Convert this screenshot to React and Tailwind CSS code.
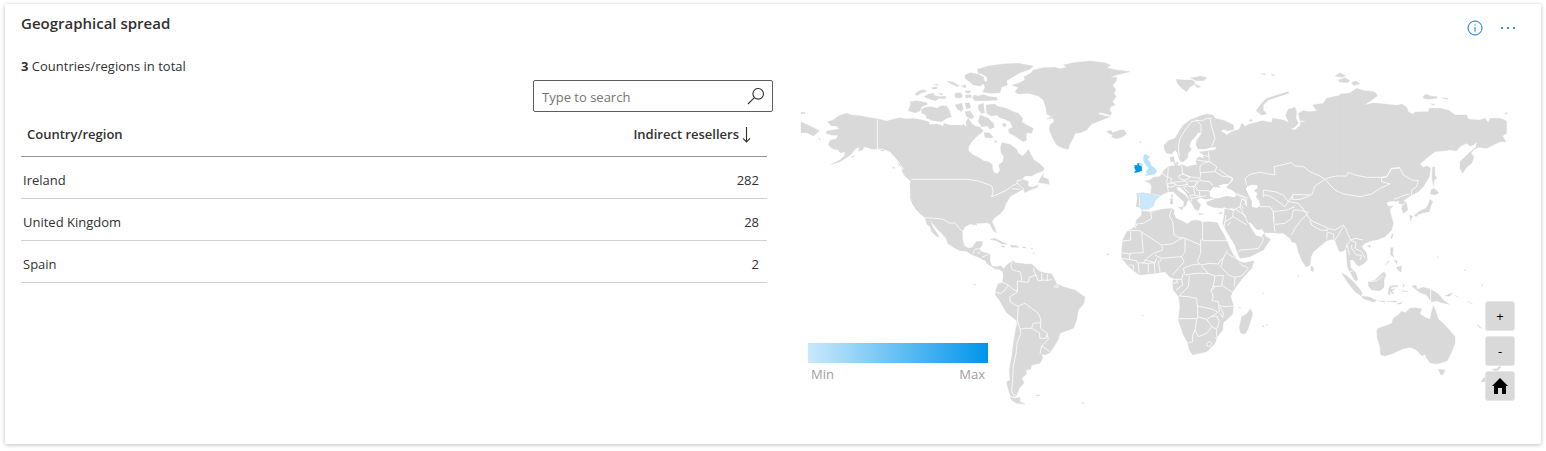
import React from "react";

const rows = [
  { name: "Ireland", count: 282 },
  { name: "United Kingdom", count: 28 },
  { name: "Spain", count: 2 },
];

const land = [
  {
    at: "translate(0 0)",
    d: "M112 216L130 210 140 202 152 195 170 190 185 195 210 197 240 203 262 206 290 213 310 208 330 203 345 207 370 206 395 210 415 216 418 225 440 224 452 226 460 232 462 220 480 226 520 226 520 500 410 505 395 492 380 480 368 462 362 445 363 420 361 400 361 390 372 394 362 385 345 375 338 368 335 352 326 345 325 335 315 322 300 305 288 300 278 303 262 297 245 297 235 293 222 290 218 300 205 303 208 290 195 298 183 313 172 322 150 335 122 344 150 330 163 318 165 306 150 308 145 300 130 297 120 290 115 283 122 270 138 267 145 256 125 255 108 250 112 242 130 240 148 237 140 228 125 228ZM33 215L60 228 88 242 80 250 70 258 50 248 33 248ZM33 187H45V191H33ZM85 264L92 268 88 269ZM182 322L192 317 190 322ZM340 374L352 378 370 394 358 390ZM308 350L314 353 310 356Z",
  },
  {
    at: "translate(330 0)",
    d: "M14 206L20 208 40 206 65 210 85 216 88 225 110 222 125 226 127 233 133 222 155 228 175 226 185 232 190 222 200 232 198 215 205 205 215 220 225 228 240 232 250 242 245 248 235 255 228 262 215 275 205 292 206 302 218 314 235 322 250 332 268 336 277 345 278 360 285 370 294 370 300 360 296 345 308 335 312 320 303 308 302 290 306 278 330 283 340 290 350 298 355 310 368 318 378 308 385 298 392 312 402 330 420 342 432 354 430 362 410 370 395 378 375 378 366 388 385 394 384 408 400 412 415 404 412 412 390 420 375 428 370 418 350 428 330 440 325 450 318 460 312 478 300 492 282 505 276 515 283 530 290 548 283 545 276 535 270 522 260 518 240 520 228 520 230 526 210 522 195 530 187 545 188 570 193 588 205 595 218 592 225 580 228 575 248 574 245 588 238 596 240 608 255 608 270 612 268 630 250 630 230 618 215 614 200 604 180 602 160 592 143 580 138 565 125 550 112 538 98 520 90 508 98 530 108 545 118 562 108 558 95 545 90 530 80 522 75 503 62 492 50 480 38 462 32 445 30 400 38 394 30 388 24 384ZM432 368L428 382 445 388 448 403 430 400 415 398 420 386ZM32 155L50 152 80 158 82 163 65 170 60 183 45 188 25 183 30 168ZM65 178L75 172 95 170 110 175 125 167 140 168 148 180 150 190 155 200 140 205 125 215 100 212 80 205 78 195 65 190ZM45 133L55 123 72 119 80 124 62 130 50 137ZM72 140L85 132 100 130 105 137 120 140 138 138 135 146 115 145 108 152 90 148ZM115 130L128 131 124 136ZM95 113L112 110 110 117 98 117ZM100 104L115 103 114 106ZM140 93L160 97 178 107 172 110 150 100ZM184 108L198 104 196 114ZM165 130L182 128 188 138 180 145 165 142ZM196 122L212 123 208 129 198 128ZM195 75L210 68 235 73 250 80 255 98 240 108 220 105 205 92 195 85ZM232 58L265 48 310 42 355 40 400 48 390 58 360 68 340 80 320 92 322 105 305 112 300 128 275 130 248 126 255 112 250 98 262 92 260 80 245 72 235 70ZM222 135L235 138 250 134 270 140 290 142 292 150 260 152 225 152 218 145ZM196 135L212 134 216 142 198 144ZM165 165L185 160 190 175 185 185 172 178ZM195 160L208 158 212 172 200 178ZM195 185L210 183 222 200 215 207 200 200ZM235 165L250 160 254 188 244 190 235 178ZM258 165L285 162 290 168 318 175 340 185 355 190 368 205 365 215 380 225 400 235 395 250 380 248 378 260 380 270 370 275 358 268 340 255 328 250 325 238 338 232 330 215 315 208 300 203 290 195 275 198 260 190ZM240 195L265 205 280 220 283 232 270 238 262 228 245 230 235 215ZM308 220L318 222 316 230 309 229ZM252 248L268 248 280 262 270 264 255 262ZM282 272L292 274 288 278ZM335 105L355 100 375 90 372 80 392 70 400 60 430 53 465 52 480 56 500 52 490 45 520 38 570 33 615 38 632 46 620 54 650 60 690 65 670 70 650 75 630 82 650 82 648 95 638 105 648 120 642 130 648 140 638 155 645 165 632 170 628 180 634 186 632 196 600 187 595 192 615 198 630 200 600 212 575 222 560 240 540 248 525 250 520 265 510 280 505 298 490 295 470 285 458 265 448 240 450 225 462 215 460 205 440 207 455 200 440 192 438 175 430 150 415 138 385 130 355 132 345 125 355 112ZM620 245L632 240 638 248 660 240 672 240 680 252 665 262 650 266 635 262 638 255 625 250ZM270 568L285 565 305 575 322 583 305 582 290 572ZM330 585L350 587 357 592 335 592ZM305 588H314V591H305ZM368 591H376V594H368Z",
  },
  {
    at: "translate(510 510)",
    d: "M38 98L55 88 70 97 90 103 90 122 95 137 110 141 122 137 130 145 126 155 118 148 108 148 95 140 80 130 75 120 60 112 45 108ZM128 150L140 135 152 127 160 122 165 128 180 130 200 133 215 132 225 142 240 155 262 160 275 162 285 180 290 192 315 202 345 210 362 222 375 232 372 250 355 270 350 300 340 325 320 332 300 340 295 358 283 378 270 398 255 405 245 402 248 415 240 430 215 435 212 448 198 450 200 462 185 475 192 488 178 505 172 520 168 530 152 528 145 510 140 485 150 480 148 450 155 410 160 370 167 330 170 302 155 290 140 278 130 262 118 240 106 225 108 208 115 190 128 185 130 168ZM150 530L165 535 180 532 180 545 195 552 170 550 155 540ZM228 525L242 526 232 529ZM214 84H217V87H214ZM219 98H222V101H219ZM364 546L372 550 368 551ZM42 192H46V195H42ZM441 101H444V104H441Z",
  },
  {
    at: "translate(930 0)",
    d: "M135 393L150 390 160 382 175 380 185 370 195 358 205 350 218 347 225 348 222 335 212 335 210 322 222 320 222 330 226 340 235 348 248 345 262 350 280 345 292 345 288 335 290 325 298 320 312 325 308 312 298 306 325 302 345 300 350 290 335 292 315 297 295 297 288 285 290 270 300 258 305 250 295 247 285 262 272 275 268 290 275 298 265 308 262 325 250 335 242 335 235 320 232 308 225 300 215 312 200 310 193 298 192 285 205 272 225 265 240 240 250 225 270 210 300 198 320 192 340 196 345 205 375 212 400 225 402 238 385 243 370 238 362 244 378 252 380 260 390 252 410 246 425 235 428 220 434 230 455 222 490 212 500 540 540 550 500 545 490 535 475 538 460 525 448 510 442 515 455 535 468 555 485 560 493 548 495 558 512 568 490 600 450 620 420 625 415 615 405 585 382 550 375 535 368 520 372 500 375 470 365 475 340 472 322 465 320 455 345 447 335 445 318 448 300 443 290 450 302 465 295 482 285 478 278 465 272 455 265 440 255 425 240 412 228 412 235 422 255 435 268 450 262 452 258 468 250 470 252 455 235 440 220 425 205 425 190 432 180 438 165 452 160 468 145 478 125 478 118 472 108 470 112 445 110 430 130 428 152 432 155 410 150 400ZM234 472L250 470 246 480ZM211 446H218V462H211ZM214 434H218V442H214ZM296 490L312 492 298 494ZM355 489L368 486 362 492ZM228 336L236 338 232 344ZM228 88L250 90 275 90 285 95 280 105 270 110 260 125 245 115 232 100ZM272 84L300 79 320 82 312 92 290 92ZM280 100L302 110 292 113ZM120 275H123V279H120ZM446 211L456 210 452 214Z",
  },
  {
    at: "translate(930 420)",
    d: "M125 62L152 66 185 58 215 55 222 60 222 72 228 85 245 92 262 102 275 92 290 90 308 96 330 95 352 98 362 118 370 130 382 155 390 175 400 195 418 215 435 218 462 212 455 235 430 262 408 290 398 305 392 320 400 345 398 372 385 385 370 398 368 420 352 440 345 460 320 485 300 490 278 494 268 480 262 455 250 435 235 390 240 350 236 320 220 300 218 282 220 265 210 262 195 245 180 248 165 250 120 255 100 242 82 225 65 205 65 185 68 150 80 125 105 110 110 90 125 75ZM452 356L458 372 445 415 435 432 422 430 418 412 425 380 440 372ZM488 407H492V410H488ZM498 404H502V406H498ZM418 352H422V354H418ZM126 376H129V378H126ZM22 192H25V194H22Z",
  },
  {
    at: "translate(1290 30)",
    d: "M20 225L35 215 58 208 65 190 75 200 88 192 100 190 125 183 155 187 158 175 190 180 206 188 197 165 205 148 225 142 230 155 228 175 235 190 222 203 210 207 225 210 242 195 240 185 258 186 250 182 240 182 235 160 250 152 270 155 290 152 278 135 310 130 320 115 350 108 390 100 410 85 430 92 460 95 472 108 455 120 430 137 460 130 500 133 550 138 550 420 500 425 500 432 510 445 510 500 40 500 20 480ZM110 150L125 130 140 115 165 107 205 95 206 100 170 112 145 120 130 135 130 150 140 162 125 165 108 152ZM345 48L360 38 377 48 365 52ZM355 60L375 53 390 62 382 68 358 66ZM395 68L408 63 420 72 400 76ZM122 40L137 42 135 45ZM153 43L165 44 160 47ZM88 180L96 179 94 185Z",
  },
  {
    at: "translate(1650 30)",
    d: "M0 102L30 100 50 86 70 92 105 97 112 105 90 122 70 137 95 130 135 133 165 138 185 132 200 142 205 155 218 163 225 156 265 155 268 145 300 145 325 150 345 165 380 165 385 178 420 180 435 175 445 188 450 175 480 175 500 183 500 220 487 228 498 245 480 245 460 255 440 265 415 262 400 270 393 280 402 290 395 310 380 322 368 340 360 325 360 305 375 290 388 278 408 262 410 245 400 255 390 258 380 250 362 258 350 272 330 270 285 275 265 290 240 312 250 322 262 318 272 325 268 350 250 380 235 395 215 405 205 412 190 422 200 430 203 450 190 460 185 445 188 435 175 428 180 420 165 425 160 415 135 432 140 440 160 438 148 448 160 490 155 510 135 530 110 540 0 545ZM277 322L284 320 285 345 290 355 283 360 280 378 276 350ZM275 388L282 385 297 398 285 405 270 402ZM270 418L278 425 272 440 268 455 250 458 240 462 225 464 240 452 258 445 265 432ZM208 465L218 468 212 482ZM222 466L235 464 228 470ZM250 108L258 103 272 108 292 110 290 115 265 118 250 115ZM305 113L325 115 322 118ZM272 131L284 133 280 136ZM496 158H501V162H496Z",
  },
  {
    at: "translate(1320 390)",
    d: "M45 60L55 128 72 140 80 152 105 158 130 158 160 160 180 175 185 185 198 190 205 215 215 240 228 262 240 255 243 230 250 215 275 195 290 182 305 178 315 180 320 195 328 215 342 212 348 205 350 230 352 262 362 280 375 302 384 300 378 280 362 262 360 240 370 240 378 252 388 258 400 252 412 240 410 220 395 200 405 190 430 180 460 170 480 150 488 130 475 95 470 70 100 60ZM412 198L420 195 420 203ZM243 258L250 262 250 275 243 272ZM482 175L486 162 490 161 486 175ZM482 203L490 203 488 220 492 232 482 225ZM500 262L515 258 513 277 502 268ZM492 240L502 243 500 252ZM466 256L476 242 478 244ZM335 280L348 285 365 300 385 322 397 340 393 348 375 335 355 310ZM395 348L420 352 440 362 430 366 400 356ZM445 362L465 364 463 367ZM470 364L500 363 498 367ZM500 372L518 365 512 372ZM415 305L435 300 450 285 462 275 468 285 462 300 462 322 450 332 425 330 415 318ZM475 345L476 325 482 318 504 316 502 320 484 322 482 328 496 326 486 333 492 342 486 341 481 333 479 345ZM520 310L524 318 520 322ZM516 332L534 334 520 335ZM98 340H101V342H98ZM204 286H207V289H204Z",
  },
  {
    at: "translate(1620 570)",
    d: "M245 138L258 136 262 148 280 142 300 147 325 162 340 180 358 193 335 188 320 182 305 186 298 178 290 165 270 158 256 147ZM345 168L368 158 360 168ZM375 165L386 172 380 169ZM412 183L428 192 422 190ZM440 252L455 265 450 264ZM140 272L145 265 165 258 185 250 190 235 205 225 215 213 225 218 240 205 255 203 275 206 270 222 285 232 300 238 305 215 310 197 318 215 325 238 345 255 360 272 375 290 375 310 365 335 352 362 335 368 318 372 300 368 288 352 286 342 276 348 260 330 240 322 215 328 190 340 165 348 152 345 150 320 142 295ZM325 388L345 390 340 403 332 405ZM485 388L500 386 508 378 513 382 505 390 495 392ZM466 410L466 425 453 426 458 417ZM403 89H406V92H403ZM323 50H326V53H323ZM454 134H457V137H454Z",
  },
];

const seas = [
  {
    at: "translate(930 0)",
    d: "M330 439L329 425 340 412 352 412 362 414 356 407 372 402 388 402 378 412 395 420 410 432 405 442 380 438 355 445 340 445Z",
  },
  {
    at: "translate(1290 30)",
    d: "M78 388L82 379 95 374 112 375 112 385 102 392 112 400 108 412 118 422 120 438 110 444 95 440 96 425 86 405Z",
  },
  {
    at: "translate(1320 390)",
    d: "M55 126L66 132 75 145 82 150 96 148 104 160 95 160 88 168 76 163 64 145Z",
  },
];

const borders = [
  {
    at: "translate(0 0)",
    d: "M262 206V297L280 298 290 304 310 320 325 335 340 358",
  },
  {
    at: "translate(330 0)",
    d: "M35 388H203L235 393 255 400 275 408 280 425 275 440 295 432 320 420 335 408 350 402 352 392 365 390M335 416L362 418M352 400L372 418M75 503L105 505 130 508 150 520 165 518 178 535 188 545M218 612L225 598 238 596M235 612L240 604M245 622L268 612",
  },
  {
    at: "translate(510 510)",
    d: "M157 125L152 138 158 150 182 156 186 185 205 187 208 172 228 165 220 150 224 143M228 165L235 183 250 180 262 182 275 178M245 160V182M262 162V182M186 185L172 183V215L155 205 145 195 128 187 115 190M145 195L135 210 122 220 108 218M172 207L170 218 150 230 150 245 165 255 175 258 195 250 215 265 235 280 243 300 242 310M175 258L172 300 180 328 195 325 215 325 220 310 242 308 242 325 262 340 258 355 240 355 238 338 215 325M262 345L265 358 245 378 270 395M245 378L240 402M180 328L183 340 172 365 168 400 160 440 158 480 155 510 158 522 175 530M172 302L168 320M282 200L290 194 296 200 286 203Z",
  },
  {
    at: "translate(930 0)",
    d: "M238 320L235 290 240 265 255 240 275 215 290 212 303 225 303 248M285 210L305 213 320 205 335 205M330 205L335 230 345 265 335 290M304 315L328 320M290 330L325 335M325 304L328 335 350 350 345 365 300 368 300 348 312 340 328 334M245 348L248 372 270 380 300 385 302 368M300 385L300 392 330 395 338 408M345 365L365 378 395 382 397 392 385 402M205 352L203 380 215 385 212 398 235 395M235 378L250 372 270 383 255 390 240 387ZM235 395L260 393 262 403 235 408 225 402M265 393L297 393 285 408 268 411 262 402M290 395L285 410 295 422 325 422 332 426M298 425L300 440 320 437M280 410L285 435 300 440 275 445M262 408L250 412 268 430M270 435L276 455M285 435L272 435M185 370L203 382 200 398 205 425M203 400L225 400 225 408 205 412ZM175 380L190 368M119 440V470M152 432L180 437",
  },
  {
    at: "translate(930 420)",
    d: "M372 55L400 60 420 50 425 28M420 50L430 70 445 100M375 95L400 80 440 105M400 60L398 80M378 75L372 112M382 108L392 95M415 185L420 180 450 178 475 175 488 155 490 142M410 15L445 25M425 28L440 28 435 45M468 135L488 140M152 66L155 85 130 100 110 102 105 115M82 122L118 122 185 165 215 162 250 142M92 125V150L65 154M125 128L130 188 90 190M185 165L188 180 160 190 135 210 130 220M235 142L222 135 218 95 208 78 215 58M235 142L255 145 302 165 302 150 308 150V93M308 152L382 152M255 145V185L245 200 185 205 180 215M302 165V190L292 215 302 225M250 235L275 225 300 222M245 200L252 215 235 235 218 255M302 225L330 220 355 222 360 212 370 205 382 180M382 190L410 208M370 205L362 230 385 255 405 262 425 258 445 235 425 225 418 218M305 228L325 250 345 258 372 256M250 235L255 255 290 250 325 250M370 258L365 285 398 308M405 262L403 290M345 258L340 290 365 288M268 258L265 290 245 310 238 318 265 320 290 325 292 348 335 357 352 365M335 332L355 335 358 365 320 388 293 380M340 290L333 300 340 320 335 332M293 348L293 386H235M358 345L370 350 400 348M360 350L370 370 368 382 360 370M320 388L335 410 350 418 358 395 350 378 335 380M290 388L285 420 278 435V455L262 460M285 420L295 440 320 430 335 410M350 418V440M320 462L328 454 336 460 330 470 322 468ZM65 188L90 192M65 205L85 208 110 212 115 225 118 250M90 190L88 208M115 218L145 220V248M88 225L100 225 100 240M135 210L165 218 170 205M163 218L165 250M175 212L180 248M145 220L165 218M165 195L185 205M218 268L245 268 250 250M230 268L232 278 220 280M245 268L248 285 228 300M343 292L335 300M345 445L352 443",
  },
  {
    at: "translate(1290 30)",
    d: "M80 375L75 355 90 343 120 337 165 345 162 320 215 308 225 318 250 320 270 335 300 348 315 358 330 352 350 348 380 348 385 337 405 345 440 352 485 352 500 350 515 325 540 322M315 358L330 375 345 390 370 402 420 410 455 402 480 385 510 372 485 365 485 352M315 358L285 378 275 405 220 403 205 425M130 412V390L165 395 190 405 205 425 195 440 175 425 150 408 130 405M120 440L150 440 160 455 200 450 225 440M220 403L215 418 240 418 270 407M205 425L235 430 245 443M160 455L162 485M-2 328L20 345 38 355 30 370M50 400L75 412M62 415L80 425 78 435M60 430L70 445",
  },
  {
    at: "translate(1650 30)",
    d: "M124 354L140 350 155 325 180 325 190 345 215 360 235 362 230 380 215 390 215 405M162 418L195 405 210 402M182 434L196 432",
  },
  {
    at: "translate(1320 390)",
    d: "M130 95L132 135 135 155M135 133L165 130 185 115 190 90 205 90 230 95M215 80L240 118 250 125 290 142 292 152 270 150 245 135 240 120M235 95L225 110 215 118 195 145 185 165M292 145L315 150 340 135 350 150 352 160 362 180 350 195 348 205M292 155L290 178M295 157L310 162 312 178M340 140L325 165 315 180M362 180L378 188 375 205 395 215 405 235M362 180L378 175 398 180M365 195L365 205 378 225 395 225 390 240M352 195L358 225M360 275L370 272M418 305L440 302 460 288M45 60L50 80M0 85L20 90 50 110",
  },
  { at: "translate(1620 570)", d: "M302 146V187" },
];

function WorldMap() {
  return (
    <svg
      viewBox="-51 0 2256 1110"
      className="block h-auto w-full"
      role="img"
      aria-label="Indirect resellers by country"
    >
      <g fill="#d9d9d9" stroke="#d9d9d9" strokeWidth="1" strokeLinejoin="round">
        {land.map((s) => (
          <path key={s.at} transform={s.at} d={s.d} />
        ))}
      </g>
      <g fill="#ffffff">
        {seas.map((s) => (
          <path key={s.at} transform={s.at} d={s.d} />
        ))}
      </g>
      <g fill="none" stroke="#ffffff" strokeWidth="2.4" strokeLinejoin="round">
        {borders.map((s) => (
          <path key={s.at} transform={s.at} d={s.d} />
        ))}
      </g>
      <g transform="translate(930 0)" strokeLinejoin="round">
        <path
          fill="#cae8fb"
          d="M110 430L130 428 155 432 180 438 165 452 160 468 145 478 125 479 120 470 122 455 124 442 112 440Z"
        />
        <path
          fill="#b8e1fa"
          d="M130 318L135 312 150 320 143 328 150 335 155 347 165 355 171 363 165 373 150 375 134 378 143 369 136 366 146 356 138 345 130 334ZM117 341L125 339 129 347 119 347Z"
        />
        <path
          fill="#0095eb"
          d="M104 345L113 346 111 341 118 338 117 346 125 349 126 362 115 367 102 369 107 361 103 354Z"
        />
      </g>
    </svg>
  );
}

const zoomButton =
  "flex size-[30px] items-center justify-center rounded-[3px] border border-[#e6e6e6] bg-[#d9d9d9] text-[13px] leading-none text-black";

export default function App() {
  return (
    <main className="px-[5px] pt-1 pb-[7px] font-['Open_Sans','Noto_Sans',sans-serif] text-[13px] leading-5 text-[#323130]">
      <section className="rounded-[2px] bg-white px-4 pb-6 shadow-[0_1px_4px_rgba(0,0,0,0.26)]">
        <header className="flex h-[46px] items-start justify-between">
          <h2 className="pt-[9px] text-[15px] font-semibold">Geographical spread</h2>
          <div className="flex gap-4 pt-4 pr-2">
            <button type="button" aria-label="Information" className="size-4">
              <svg viewBox="0 0 16 16" className="size-4" fill="none" stroke="#0078d4">
                <circle cx="8" cy="8" r="7" />
                <path d="M8 7v4.6M8 4.4v1.2" />
              </svg>
            </button>
            <button type="button" aria-label="More options" className="h-4 w-[18px]">
              <svg viewBox="0 0 18 16" className="h-4 w-[18px]" fill="#0078d4">
                <circle cx="3" cy="8" r="1.1" />
                <circle cx="9" cy="8" r="1.1" />
                <circle cx="15" cy="8" r="1.1" />
              </svg>
            </button>
          </div>
        </header>

        <div className="grid grid-cols-2">
          <div className="pt-[6px]">
            <p>
              <strong className="font-bold">3</strong> Countries/regions in total
            </p>
            <div className="mt-1 ml-auto flex h-8 w-60 items-center rounded-[2px] border border-[#605e5c] pr-[7px] pl-2">
              <input
                type="text"
                aria-label="Search countries"
                placeholder="Type to search"
                className="min-w-0 flex-1 bg-transparent pt-[2px] outline-none placeholder:text-[#767472]"
              />
              <svg viewBox="0 0 18 18" className="size-[18px]" fill="none" stroke="#323130" strokeWidth="1.1">
                <circle cx="11.2" cy="6.8" r="5.3" />
                <path d="M7.4 10.6L1 17" />
              </svg>
            </div>
            <div className="pr-[6px]">
              <table className="w-full border-collapse">
                <thead>
                  <tr className="h-11 border-b border-[#979593]">
                    <th scope="col" className="pl-[6px] text-left font-semibold">
                      Country/region
                    </th>
                    <th scope="col" className="pr-4 text-right font-semibold">
                      <button type="button" className="inline-flex items-center gap-[3px]">
                        Indirect resellers
                        <svg viewBox="0 0 9 18" className="h-[18px] w-[9px]" fill="none" stroke="#323130" strokeWidth="1.1">
                          <path d="M4.5 2v15M1 13.4l3.500 3.600 3.500-3.600" />
                        </svg>
                      </button>
                    </th>
                  </tr>
                </thead>
                <tbody>
                  {rows.map((r) => (
                    <tr key={r.name} className="h-[42px] border-b border-[#d0d0d0]">
                      <td className="pt-[6px] pl-[2px]">{r.name}</td>
                      <td className="pt-[6px] pr-2 text-right">{r.count}</td>
                    </tr>
                  ))}
                </tbody>
              </table>
            </div>
          </div>

          <div className="relative">
            <WorldMap />
            <div className="absolute bottom-[35px] left-[35px] w-[180px] text-[#a0a0a0]">
              <div className="h-5 bg-linear-to-r/srgb from-[#cae9fb] to-[#0095eb]" />
              <div className="flex h-[22px] items-center justify-between px-[3px]">
                <span>Min</span>
                <span>Max</span>
              </div>
            </div>
            <div className="absolute right-[10px] bottom-[19px] flex flex-col gap-[5px]">
              <button type="button" aria-label="Zoom in" className={zoomButton}>
                +
              </button>
              <button type="button" aria-label="Zoom out" className={zoomButton}>
                -
              </button>
              <button type="button" aria-label="Reset map" className={zoomButton}>
                <svg viewBox="0 0 16 16" className="size-4" fill="#000000">
                  <path d="M8 0L16 8H14V16H10V10H6V16H2V8H0Z" />
                </svg>
              </button>
            </div>
          </div>
        </div>
      </section>
    </main>
  );
}
